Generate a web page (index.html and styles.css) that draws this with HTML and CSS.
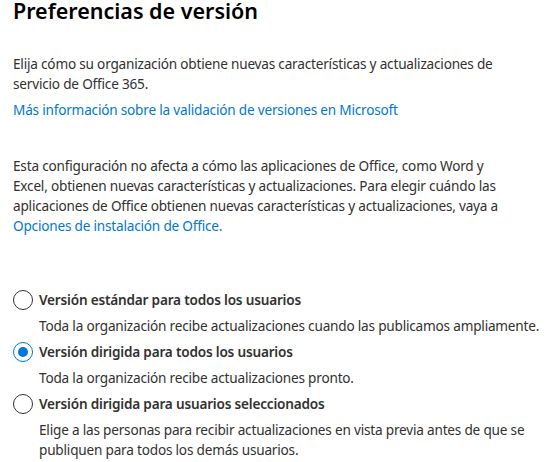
FILE: index.html
```html
<!DOCTYPE html>
<html lang="es">
<head>
<meta charset="utf-8">
<title>Preferencias de versión</title>
<link rel="stylesheet" href="styles.css">
</head>
<body>
<main class="panel">
  <h1 class="title">Preferencias de versión</h1>
  <p class="text intro">Elija cómo su organización obtiene nuevas características y actualizaciones de<br>servicio de Office 365.</p>
  <p class="text"><a class="link" href="#">Más información sobre la validación de versiones en Microsoft</a></p>
  <p class="text note">Esta configuración no afecta a cómo las aplicaciones de Office, como Word y<br>Excel, obtienen nuevas características y actualizaciones. Para elegir cuándo las<br>aplicaciones de Office obtienen nuevas características y actualizaciones, vaya a<br><a class="link" href="#">Opciones de instalación de Office.</a></p>
  <div class="options">
    <div class="option">
      <div class="option-row">
        <span class="radio"></span>
        <span class="label">Versión estándar para todos los usuarios</span>
      </div>
      <p class="desc">Toda la organización recibe actualizaciones cuando las publicamos ampliamente.</p>
    </div>
    <div class="option">
      <div class="option-row">
        <span class="radio checked"></span>
        <span class="label">Versión dirigida para todos los usuarios</span>
      </div>
      <p class="desc">Toda la organización recibe actualizaciones pronto.</p>
    </div>
    <div class="option">
      <div class="option-row">
        <span class="radio"></span>
        <span class="label">Versión dirigida para usuarios seleccionados</span>
      </div>
      <p class="desc">Elige a las personas para recibir actualizaciones en vista previa antes de que se<br>publiquen para todos los demás usuarios.</p>
    </div>
  </div>
</main>
</body>
</html>
```

FILE: styles.css
```css
* { box-sizing: border-box; }
html, body { margin: 0; padding: 0; background: #ffffff; }
body {
  font-family: "Noto Sans", "Open Sans", sans-serif;
  color: #323130;
  font-size: 13.6px;
  letter-spacing: -0.2px;
  line-height: 20px;
}
.panel {
  padding: 0 14px 0 13px;
  width: 547px;
}
.title {
  margin: 0;
  font-size: 21.5px;
  line-height: 22px;
  font-weight: 600;
  letter-spacing: 0;
  color: #000000;
}
.text { margin: 0; white-space: nowrap; }
.intro { margin-top: 32px; }
.text + .text { margin-top: 6px; }
.note { margin-top: 36px !important; }
.link { color: #0078d4; text-decoration: none; }
.options {
  margin-top: 54px;
  display: flex;
  flex-direction: column;
  gap: 6px;
}
.option-row {
  display: flex;
  align-items: center;
  gap: 6px;
}
.radio {
  width: 20px;
  height: 20px;
  border-radius: 50%;
  border: 1px solid #323130;
  flex: none;
  display: flex;
  align-items: center;
  justify-content: center;
}
.radio.checked { border-color: #0078d4; }
.radio.checked::after {
  content: "";
  width: 10px;
  height: 10px;
  border-radius: 50%;
  background: #0078d4;
}
.label { font-weight: 600; }
.desc { margin: 6px 0 0 26px; white-space: nowrap; }
```
